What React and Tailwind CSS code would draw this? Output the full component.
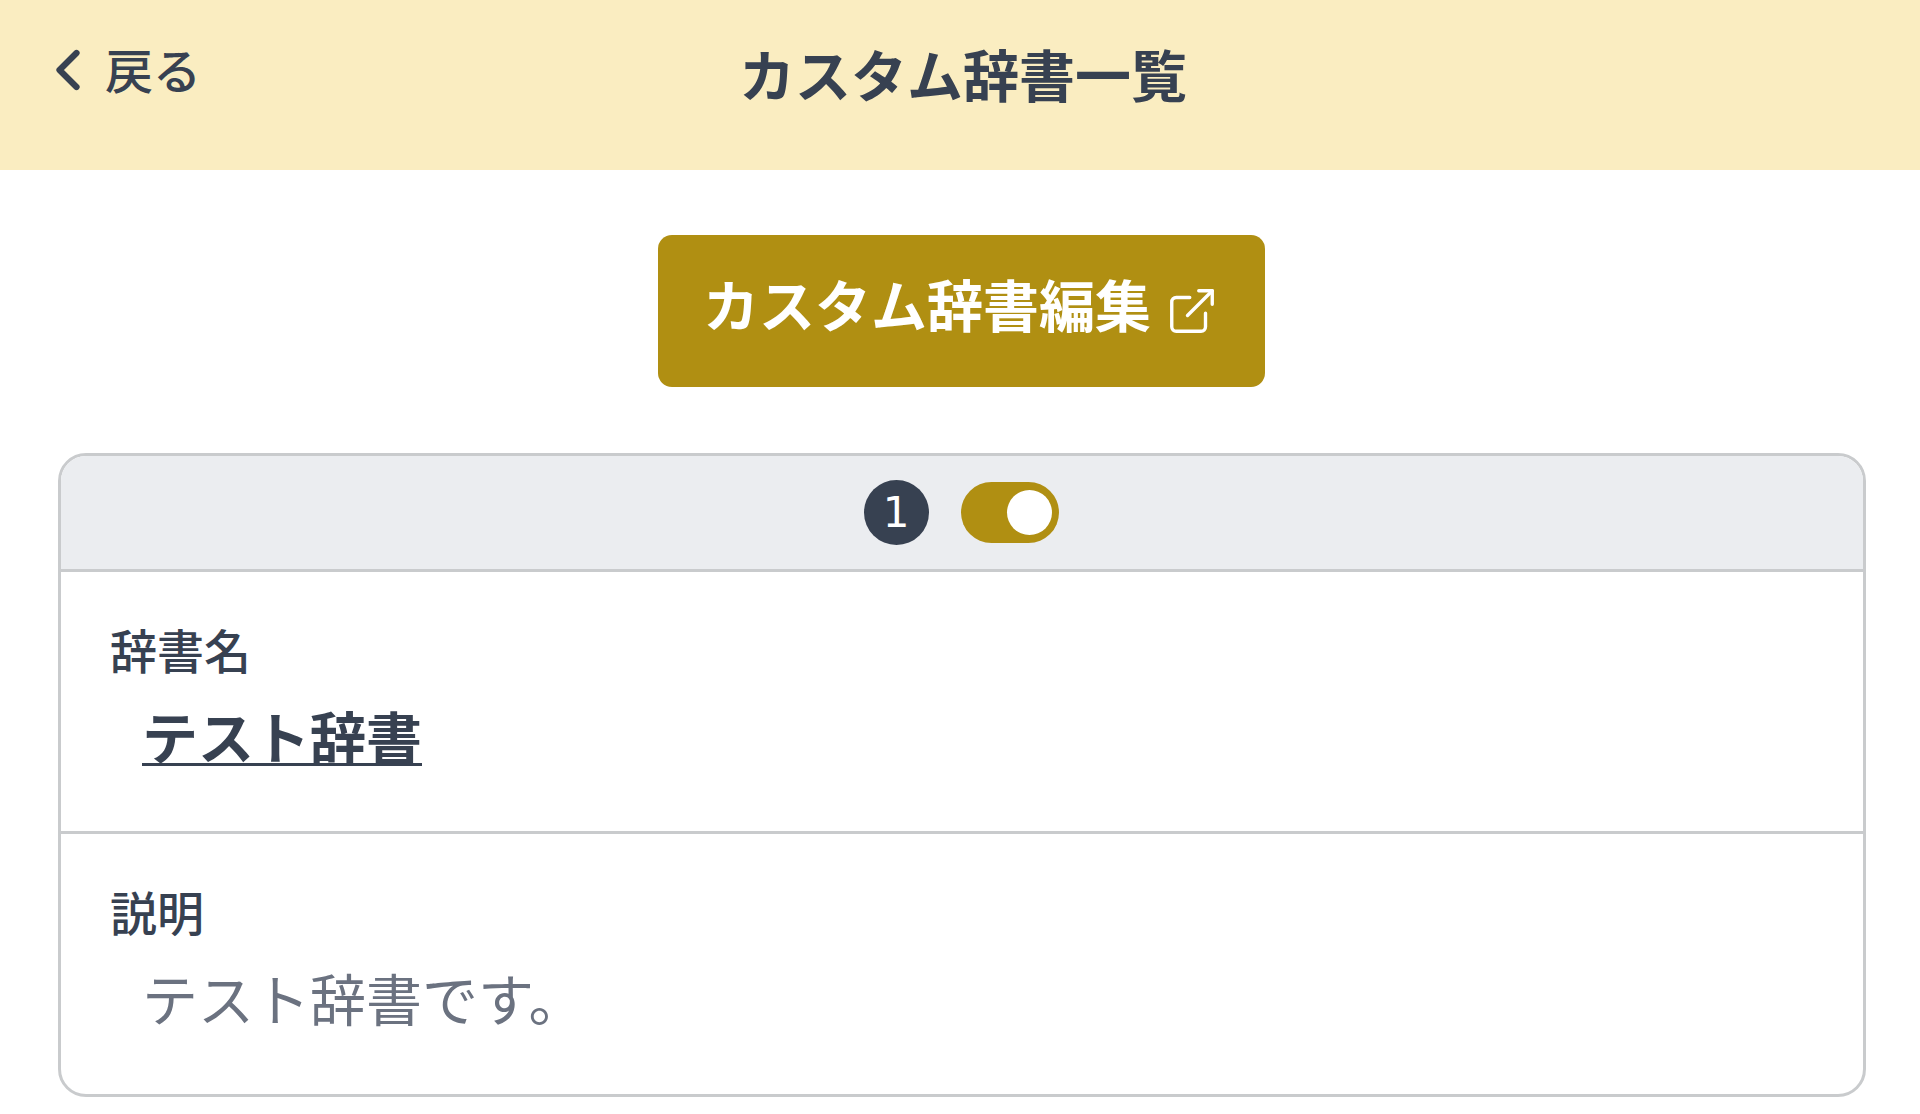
import { ChevronLeft, ExternalLink } from "lucide-react";

export default function App() {
  return (
    <div className="min-h-screen bg-white text-[#374151] font-['Noto_Sans_CJK_JP','Noto_Sans',sans-serif]">
      {/* Header */}
      <header className="h-[170px] bg-[#faedc1] grid grid-cols-[1fr_auto_1fr] items-center pl-[34px] pr-[28px]">
        <a href="#" className="flex items-center gap-[3px] mb-[34px] text-[48px] leading-[60px] font-medium">
          <ChevronLeft size={68} strokeWidth={2.2} className="mt-[4px]" />
          <span>戻る</span>
        </a>
        <h1 className="text-[56px] leading-[70px] font-bold mb-[25px]">カスタム辞書一覧</h1>
        <div />
      </header>

      <main className="pl-[58px] pr-[54px]">
        <div className="flex justify-center pt-[65px] pb-[66px] pr-[2px]">
          <button className="h-[152px] w-[607px] rounded-[14px] bg-[#b08f12] text-white flex items-center justify-center gap-[14px] text-[56px] font-bold">
            <span className="mb-[16px]">カスタム辞書編集</span>
            <ExternalLink size={54} strokeWidth={1.5} />
          </button>
        </div>

        {/* Dictionary card */}
        <section className="rounded-[28px] border-[3px] border-[#c9cbcd] overflow-hidden">
          <div className="h-[116px] bg-[#ebedf0] border-b-[3px] border-[#c9cbcd] flex items-center justify-center gap-[32px] pr-[2px]">
            <span className="w-[65px] h-[65px] rounded-full bg-[#374151] text-white flex items-center justify-center text-[42px] font-['DejaVu_Sans',sans-serif]">1</span>
            <span className="w-[98px] h-[61px] rounded-full bg-[#b08f12] flex items-center justify-end pr-[7px]">
              <span className="w-[45px] h-[45px] rounded-full bg-white" />
            </span>
          </div>

          <div className="px-[49px] pt-[47px] pb-[58px] border-b-[3px] border-[#c9cbcd]">
            <div className="text-[47px] leading-[60px] font-medium">辞書名</div>
            <a href="#" className="block w-fit mt-[18px] ml-[32px] text-[56px] leading-[76px] font-bold underline underline-offset-[4px] decoration-[3px]">テスト辞書</a>
          </div>

          <div className="px-[49px] pt-[47px] pb-[59px]">
            <div className="text-[47px] leading-[60px] font-medium">説明</div>
            <p className="mt-[18px] ml-[32px] text-[56px] leading-[76px] text-[#6b7280]">テスト辞書です。</p>
          </div>
        </section>
      </main>
    </div>
  );
}
